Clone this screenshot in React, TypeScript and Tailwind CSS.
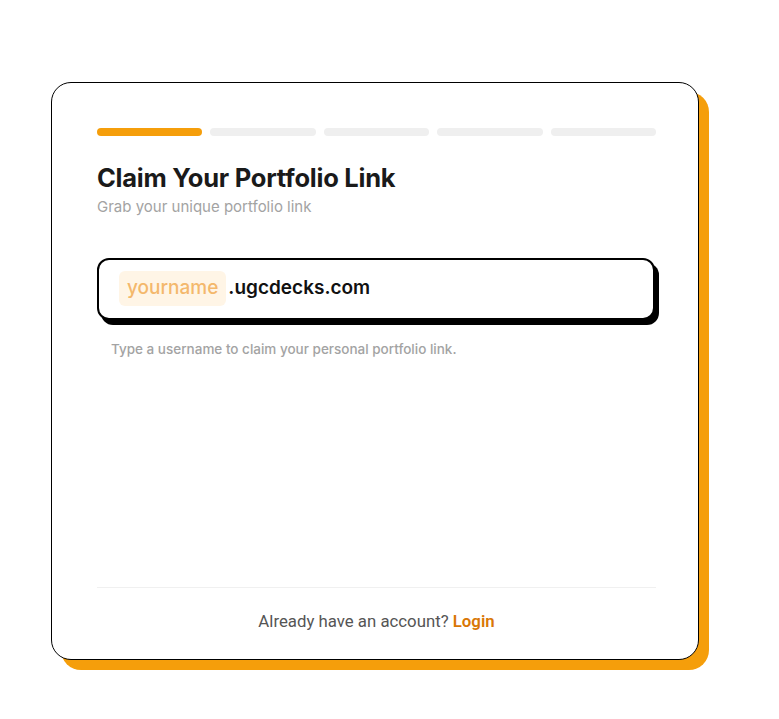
export default function App() {
  const steps = [true, false, false, false, false]

  return (
    <div className="min-h-screen bg-white pt-[82px] pl-[51px]" style={{ fontFamily: 'Inter, "Noto Sans", sans-serif' }}>
      <div className="flex h-[578px] w-[648px] flex-col rounded-[20px] border border-black bg-white pt-[45px] pr-[42px] pb-[26px] pl-[45px] shadow-[10px_10px_0_0_#f59e0b]">
        {/* progress */}
        <div className="flex gap-2">
          {steps.map((on, i) => (
            <div key={i} className={on ? 'h-2 flex-1 rounded-full bg-[#f59e0b]' : 'h-2 flex-1 rounded-full bg-[#efefef]'} />
          ))}
        </div>

        <h1 className="mt-[26px] text-[25.5px] leading-8 font-bold tracking-[-0.01em] text-[#1a1a1a]">
          Claim Your Portfolio Link
        </h1>
        <p className="mt-[2px] text-[15px] text-[#a3a3a3]">Grab your unique portfolio link</p>

        <div className="mt-[39px] mr-[1px] flex h-[62px] items-center rounded-[12px] border-2 border-black bg-white px-[20px] shadow-[4px_5px_0_0_#000]">
          <span className="rounded-md bg-[#fff5e6] px-[8px] py-[3px] text-[19px] font-medium text-[#f4b86c]">
            yourname
          </span>
          <span className="ml-[2px] text-[19px] font-semibold text-[#111]">.ugcdecks.com</span>
        </div>

        <p className="mt-[19px] pl-[14px] text-[13.5px] font-medium text-[#a3a3a3]">
          Type a username to claim your personal portfolio link.
        </p>

        <div className="mt-auto border-t border-[#f0f0f0]" />
        <p className="mt-[21px] text-center text-[16.8px] leading-6 text-[#555]" style={{ fontFamily: 'Roboto, sans-serif' }}>
          Already have an account? <span className="font-semibold text-[#d97706]">Login</span>
        </p>
      </div>
    </div>
  )
}
